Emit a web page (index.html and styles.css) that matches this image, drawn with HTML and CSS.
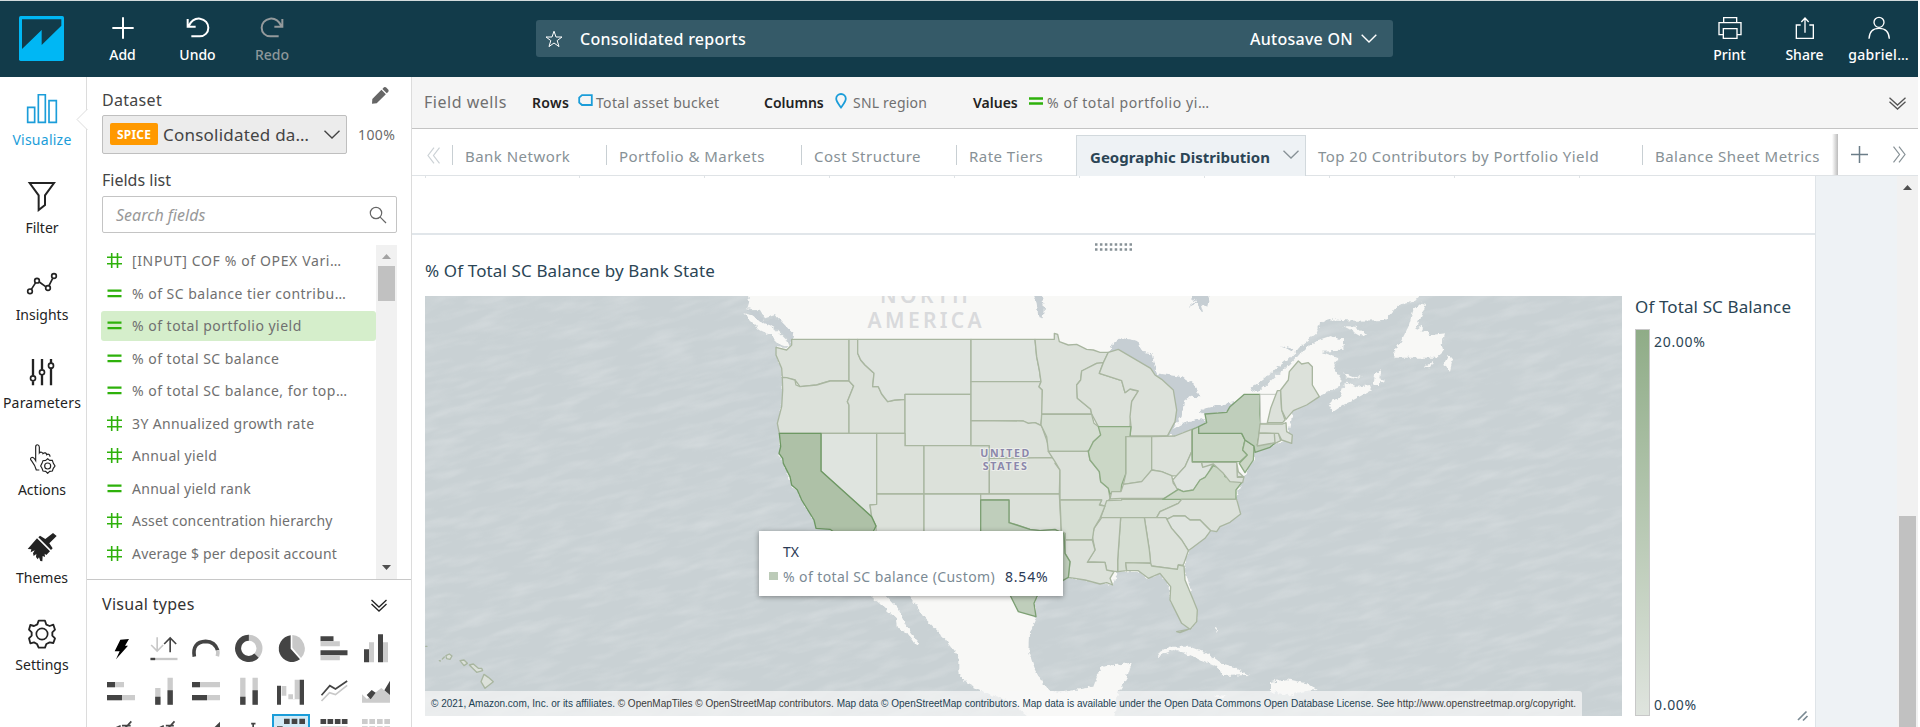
FILE: index.html
```html
<!DOCTYPE html>
<html lang="en">
<head>
<meta charset="utf-8">
<title>Consolidated reports</title>
<link rel="stylesheet" href="styles.css">
</head>
<body>
<div class="app">
  <header class="top">
    <svg class="logo" viewBox="57 48 135 135"><rect x="57" y="48" width="135" height="135" rx="5" fill="#00b7f4"/><path d="M66 58H184V77L125 135V90L66 147Z" fill="#123b4a"/></svg>
    <div class="tool add"><svg viewBox="324 48 90 72"><path d="M369 52V116M337 84H401" stroke-width="6"/></svg><span>Add</span></div>
    <div class="tool undo"><svg viewBox="550 48 90 72"><path d="M564 57V80H588M567 78C577 58 592 55 601 56C617 58 626 70 626 83C626 98 615 109 600 109H575" stroke-width="6"/></svg><span>Undo</span></div>
    <div class="tool redo"><svg viewBox="771 48 90 72"><path d="M847 57V80H823M844 78C834 58 819 55 810 56C794 58 785 70 785 83C785 98 796 109 811 109H836" stroke-width="6"/></svg><span>Redo</span></div>
    <div class="titlebar">
      <svg class="star" viewBox="0 0 18 18"><path d="M9 1.2L11 7H17L12.2 10.6L14 16.6L9 13L4 16.6L5.8 10.6L1 7H7Z"/></svg>
      <span class="doc">Consolidated reports</span>
      <span class="autosave">Autosave ON</span>
      <svg class="chev" viewBox="0 0 16 9"><path d="M.7 .7L8 8L15.3 .7"/></svg>
    </div>
    <div class="tool print"><svg viewBox="706 48 90 72"><path d="M732 68V53H771V68M731 104H718V68H784V104H772M731 86H772V115H731Z" stroke-width="4"/></svg><span>Print</span></div>
    <div class="tool share"><svg viewBox="930 48 90 72"><path d="M962 75H949V115H1000V75H988M975 98V55M964 66L975 54L986 66" stroke-width="4"/></svg><span>Share</span></div>
    <div class="tool user"><svg viewBox="1155 48 90 72"><circle cx="1200" cy="67" r="15" stroke-width="4"/><path d="M1170 116C1171 95 1182 85 1200 85S1230 95 1231 116" stroke-width="4"/></svg><span>gabriel…</span></div>
  </header>

  <div class="body">
    <nav class="nav">
      <a class="on"><svg viewBox="66 282 120 90"><path d="M83 322H104V367H83ZM115 284H136V367H115ZM147 302H169V367H147Z" stroke-width="5"/></svg><span class="n1">Visualize</span></a>
      <a><svg viewBox="66 546 120 90"><path d="M89 549H162L135 586V615L116 630V586Z" stroke-width="6"/></svg><span>Filter</span></a>
      <a><svg viewBox="66 86 120 90"><path d="M94 147L107 127M118 125L137 139M147 136L158 114" stroke-width="5"/><g stroke-width="5"><circle cx="90" cy="153" r="7"/><circle cx="111" cy="121" r="7"/><circle cx="144" cy="143" r="7"/><circle cx="162" cy="107" r="7"/></g></svg><span>Insights</span></a>
      <a><svg viewBox="66 351 120 90"><path d="M99 357V407M99 424V436M126 357V389M126 405V436M153 357V369M153 385V436" stroke-width="7"/><g stroke-width="5"><circle cx="99" cy="415" r="7.5"/><circle cx="126" cy="397" r="7.5"/><circle cx="153" cy="377" r="7.5"/></g></svg><span class="n4">Parameters</span></a>
      <a><svg viewBox="66 613 120 90"><path d="M118 691H109C105 676 101 672 92 660C90 653 98 650 104 658L107 663V622C107 613 117 613 118 622V640C122 635 128 638 129 642C134 637 139 640 140 645C146 641 150 646 150 651" stroke-width="3.500"/><path d="M143 657L149 662H157L160 671L165 679L160 686L157 694L149 695L143 701L137 695L129 694L126 686L122 679L126 671L129 663L137 662Z" stroke-width="3.500"/><circle cx="143" cy="679" r="9" stroke-width="3.500"/></svg><span>Actions</span></a>
      <a><svg viewBox="66 155 120 90"><path class="solid" d="M159 158L170 167L148 189L158 204L153 209L115 171L120 166L136 176ZM111 174L150 213L139 224L134 220L135 230L128 227L127 243L121 242L117 231L113 237L108 230L109 221L101 227L99 219L104 210L92 216L94 207L83 206Z"/></svg><span>Themes</span></a>
      <a><svg viewBox="66 417 120 90"><path d="M116 422H135L139 434L149 438L160 434L165 449L157 457V467L165 475L160 489L149 487L139 492L135 503H116L111 492L102 487L91 490L87 475L95 467V457L87 449L91 435L102 438L112 433Z" stroke-width="5.5" stroke-linejoin="round"/><circle cx="126" cy="462" r="17" stroke-width="5"/></svg><span>Settings</span></a>
    </nav>

    <aside class="panel">
      <svg class="notch" viewBox="0 0 12 22"><path d="M11.5 0L1 10.5L11.5 21" fill="#fff" stroke="#dcdcdc"/></svg>
      <div class="row head"><span class="h dataset">Dataset</span><svg class="pencil" viewBox="1115 260 54 54"><path d="M1115 313L1116 298L1145 269L1159 283L1130 312ZM1148 266L1153 261Q1157 259 1161 262L1167 269Q1169 273 1166 276L1162 280Z" fill="#666"/></svg></div>
      <div class="row source">
        <div class="select"><b>SPICE</b><span>Consolidated da…</span><svg class="chev" viewBox="0 0 16 9"><path d="M.5 .7L8 8L15.5 .7"/></svg></div>
        <span class="pct">100%</span>
      </div>
      <div class="h flist">Fields list</div>
      <div class="search"><i>Search fields</i><svg viewBox="0 0 18 18"><circle cx="7" cy="7" r="5.7"/><path d="M11.2 11.2L17 17"/></svg></div>
      <div class="listwrap">
        <ul class="list">
          <li class="s6"><svg class="hash"><use href="#hash"/></svg><span>[INPUT] COF % of OPEX Vari…</span></li>
          <li class="s5"><svg class="hash"><use href="#eq"/></svg><span>% of SC balance tier contribu…</span></li>
          <li class="sel s5"><svg class="hash"><use href="#eq"/></svg><span>% of total portfolio yield</span></li>
          <li class="s5"><svg class="hash"><use href="#eq"/></svg><span>% of total SC balance</span></li>
          <li class="s5"><svg class="hash"><use href="#eq"/></svg><span>% of total SC balance, for top…</span></li>
          <li class="s4"><svg class="hash"><use href="#hash"/></svg><span>3Y Annualized growth rate</span></li>
          <li class="s4"><svg class="hash"><use href="#hash"/></svg><span>Annual yield</span></li>
          <li class="s3"><svg class="hash"><use href="#eq"/></svg><span>Annual yield rank</span></li>
          <li class="s2"><svg class="hash"><use href="#hash"/></svg><span>Asset concentration hierarchy</span></li>
          <li class="s2"><svg class="hash"><use href="#hash"/></svg><span>Average $ per deposit account</span></li>
        </ul>
        <div class="sbar"><svg viewBox="0 0 9 5"><path d="M0 5L4.5 0L9 5Z" fill="#a3a3a3"/></svg><div class="thumb"></div><svg viewBox="0 0 9 5"><path d="M0 0L4.5 5L9 0Z" fill="#505050"/></svg></div>
      </div>
      <div class="vt"><span>Visual types</span><svg viewBox="0 0 16 13"><path d="M.5 1L8 8L15.5 1M.5 5L8 12L15.5 5"/></svg></div>
      <div class="types">
        <svg viewBox="300 440 127.5 128"><path d="M361 478L387 476L375 496H384L348 537L359 513H344Z" fill="#000"/></svg>
        <svg viewBox="427.5 440 127.5 128"><path d="M470 471V512M452 494L470 512L488 494" class="l"/><path d="M509 516V473M491 491L509 473L527 491" class="d"/><path d="M450 536H531" class="l" stroke-width="7"/><path d="M450 536H464" class="d" stroke-width="7"/></svg>
        <svg viewBox="555 440 127.5 128"><path d="M583 529C578 500 590 484 617 483C643 484 650 500 653 510" class="d" stroke-width="11"/><path d="M653 510Q655 518 652 528" class="l" stroke-width="11"/></svg>
        <svg viewBox="682.5 440 127.5 128"><circle cx="745" cy="504" r="32" class="l" stroke-width="18"/><path d="M745 472A32 32 0 1 0 768 526" class="d" stroke-width="18"/></svg>
        <svg viewBox="810 440 127.5 128"><path d="M872 465V505L900 537A40 40 0 1 1 872 465Z" fill="#444"/><path d="M877 464V502L903 533A41 41 0 0 0 877 464Z" fill="#c8c8c8"/></svg>
        <svg viewBox="937.5 440 127.5 128"><path d="M960 468H999V483H960ZM960 510H1041V525H960Z" fill="#444"/><path d="M960 483H1018V498H960ZM960 525H1018V540H960Z" fill="#ccc"/></svg>
        <svg viewBox="1065 440 127.5 128"><path d="M1092 507H1107V546H1092ZM1134 462H1149V546H1134Z" fill="#444"/><path d="M1107 486H1122V546H1107ZM1149 486H1164V546H1149Z" fill="#ccc"/></svg>
        <svg viewBox="300 568 127.5 128"><path d="M321 604H372V620H321ZM321 643H405V659H321Z" fill="#ccc"/><path d="M321 604H345V620H321ZM321 643H366V659H321Z" fill="#444"/></svg>
        <svg viewBox="427.5 568 127.5 128"><path d="M464 622H480V672H464ZM501 591H517V672H501Z" fill="#ccc"/><path d="M464 648H480V672H464ZM501 629H517V672H501Z" fill="#444"/></svg>
        <svg viewBox="555 568 127.5 128"><path d="M576 604H660V620H576ZM576 643H660V659H576Z" fill="#ccc"/><path d="M576 604H600V620H576ZM576 643H621V659H576Z" fill="#444"/></svg>
        <svg viewBox="682.5 568 127.5 128"><path d="M719 591H735V672H719ZM756 591H772V672H756Z" fill="#ccc"/><path d="M719 648H735V672H719ZM756 629H772V672H756Z" fill="#444"/></svg>
        <svg viewBox="810 568 127.5 128"><path d="M845 616H859V645H865V641H879V655H884V597H899V656H865V645H845Z" fill="#ccc"/><path d="M831 615H843V672H831ZM899 597H912V672H899Z" fill="#444"/></svg>
        <svg viewBox="937.5 568 127.5 128"><path d="M963 661L987 636L1005 642L1040 614" class="l"/><path d="M963 644L988 615L1005 625L1040 601" class="d"/></svg>
        <svg viewBox="1065 568 127.5 128"><path d="M1086 641L1101 655L1144 622L1170 643V666H1086Z" fill="#ccc"/><path d="M1100 643L1115 628L1127 636L1112 656ZM1170 600V643L1153 629Z" fill="#444"/></svg>
        <svg viewBox="300 696 127.5 128"><path d="M345 745L362 737M372 748L394 724M366 737H392" class="d"/></svg>
        <svg viewBox="427.5 696 127.5 128"><path d="M474 745L490 737M500 748L522 724M496 737H520" class="d"/></svg>
        <svg viewBox="555 696 127.5 128"><path d="M640 745L660 725V745Z" fill="#444"/></svg>
        <svg viewBox="682.5 696 127.5 128"><path d="M752 731H765M758 731V745" class="d"/></svg>
        <svg viewBox="810 696 127.5 128"><rect x="819" y="705" width="108" height="100" fill="#d3ebf7" stroke="#1b9dd9" stroke-width="6"/><path d="M852 716H869V732H852ZM875 716H892V732H875ZM898 716H915V732H898ZM831 739H848V755H831Z" fill="#444"/></svg>
        <svg viewBox="937.5 696 127.5 128"><path d="M960 717H977V732H960ZM981 717H998V732H981ZM1003 717H1020V732H1003ZM1024 717H1041V732H1024Z" fill="#444"/><path d="M960 739H1041V750H960Z" fill="#ccc"/></svg>
        <svg viewBox="1065 696 127.5 128"><path d="M1086 717H1103V732H1086ZM1108 717H1125V732H1108ZM1131 717H1148V732H1131ZM1153 717H1170V732H1153ZM1086 739H1103V750H1086ZM1108 739H1125V750H1108ZM1131 739H1148V750H1131ZM1153 739H1170V750H1153Z" fill="#ccc"/></svg>
      </div>
    </aside>

    <main class="main">
      <div class="wells">
        <span class="fw">Field wells</span>
        <b class="rows">Rows</b><svg class="tag" viewBox="0 0 15 13"><path d="M4 1.2H13.8V11H4L1.2 8.5V3.7Z"/></svg><span class="w1">Total asset bucket</span>
        <b class="cols">Columns</b><svg class="pin" viewBox="0 0 12 16"><path d="M6 14.5C3 10.5 1.2 8.300 1.200 5.800A4.800 4.800 0 0 1 10.800 5.800C10.800 8.300 9 10.500 6 14.500Z"/></svg><span class="w2">SNL region</span>
        <b class="vals">Values</b><svg class="weq" viewBox="0 0 14 8"><path d="M0 1.5H14M0 6.500H14"/></svg><span class="w3">% of total portfolio yi…</span>
        <svg class="dbl" viewBox="0 0 17 13"><path d="M.5 .7L8.500 8L16.500 .7M.5 4.700L8.500 12L16.500 4.700"/></svg>
      </div>
      <div class="tabs">
        <svg class="prev" viewBox="0 0 13 17"><path d="M7 .7L1 8.500L7 16.300M12.500 .7L6.500 8.500L12.500 16.300"/></svg>
        <span class="tab t1">Bank Network</span>
        <span class="tab t2">Portfolio &amp; Markets</span>
        <span class="tab t3">Cost Structure</span>
        <span class="tab t4">Rate Tiers</span>
        <span class="tab active"><span>Geographic Distribution</span><svg viewBox="0 0 16 9"><path d="M.5 .7L8 8L15.500 .7"/></svg></span>
        <span class="tab t6">Top 20 Contributors by Portfolio Yield</span>
        <span class="tab t7">Balance Sheet Metrics</span>
        <div class="tabend"><svg class="plus" viewBox="0 0 17 17"><path d="M8.500 0V17M0 8.500H17"/></svg><svg class="next" viewBox="0 0 13 17"><path d="M.5 .7L6.500 8.500L.5 16.300M6 .7L12 8.500L6 16.300"/></svg></div>
      </div>
      <div class="canvas">
        <div class="sheet">
          <div class="prevcard"><div class="ticks"><i></i><i></i><i></i><i></i><i></i><i></i><i></i><i></i><i></i><i></i></div></div>
          <section class="card">
            <svg class="grip" viewBox="0 0 37 8"><path d="M0 1.500H37M0 6.500H37" stroke-dasharray="2.500 2.430"/></svg>
            <h2>% Of Total SC Balance by Bank State</h2>
            <div class="visual">
              <div class="map">
                <svg class="mapsvg" viewBox="-945 18 3591 1260">
                  <defs>
                    <filter id="sea" x="0" y="0" width="100%" height="100%">
                      <feTurbulence type="fractalNoise" baseFrequency="0.008 0.035" numOctaves="3" seed="8"/>
                      <feColorMatrix values="0 0 0 0 1  0 0 0 0 1  0 0 0 0 1  1.3 0 0 0 -.55"/>
                    </filter>
                    <filter id="rough" x="-5%" y="-5%" width="110%" height="110%">
                      <feTurbulence type="fractalNoise" baseFrequency="0.08" numOctaves="2" seed="3"/>
                      <feDisplacementMap in="SourceGraphic" scale="16" xChannelSelector="R" yChannelSelector="G"/>
                    </filter>
                  </defs>
                  <rect x="-945" y="18" width="3591" height="1260" fill="#c9d1d4"/>
                  <g transform="rotate(-14 850 640)" opacity=".3"><rect x="-1300" y="-600" width="4400" height="2500" filter="url(#sea)"/></g>
                  <g fill="#f8f8f6" filter="url(#rough)">
                    <path d="M22 8L28 35L22 55L60 60L75 85L105 75L125 100L145 120L160 130L155 148L150 175L108 172L108 195L125 235L128 300L125 350L112 400L118 430L117 490L155 580L185 630L222 690L270 720L300 760L340 860L395 920L430 950L468 985L470 1010L500 1030L530 1068L538 1060L500 1010L470 950L440 918L410 860L440 830L510 918L550 980L600 1030L655 1100L655 1150L680 1180L740 1210L800 1230L830 1250L890 1300L1120 1300L1135 1205L1145 1190L1160 1165L1175 1118L1085 1130L1075 1150L1060 1190L950 1210L920 1195L885 1140L868 1090L870 1030L888 980L885 935L900 900L985 862L1118 885L1133 845L1195 842L1225 865L1260 850L1285 880L1290 930L1320 975L1350 1018L1370 995L1360 930L1332 830L1345 782L1412 722L1500 672L1488 625L1510 560L1540 510L1545 480L1640 450L1660 360L1738 318L1800 290L1802 265L1780 230L1795 205L1745 185L1785 183L1810 175L1812 150L1770 138L1735 150L1690 180L1650 225L1600 265L1555 308L1530 297L1600 243L1650 203L1680 170L1730 130L1740 100L1765 88L1850 92L1935 90L1975 45L2020 35L2045 8Z"/>
                    <path d="M10 70L35 75L60 82L100 112L140 150L150 175L120 165L90 135L60 120L30 90Z"/>
                    <path d="M1765 340L1780 365L1810 345L1840 330L1895 300L1890 285L1850 290L1822 275L1808 295L1800 320ZM1900 285L1905 255L1922 235L1918 265L1932 270L1915 285ZM1810 250L1840 262L1865 258L1850 268L1820 262ZM1810 108L1845 110L1885 138L1860 135Z"/>
                    <path d="M2045 38L2020 60L2005 110L1985 150L1960 190L1965 203L2090 203L2110 185L2105 165L2115 130L2070 135L2065 122L2045 125L2050 105L2025 120L2040 90L2058 42ZM2110 225L2125 195L2138 210L2130 242ZM2055 230L2080 212L2070 232Z"/>
                    <path d="M1252 1090L1290 1070L1350 1070L1400 1090L1440 1118L1480 1130L1527 1155L1450 1158L1430 1130L1380 1110L1340 1090L1300 1080L1255 1098ZM1590 1176L1640 1168L1700 1180L1730 1200L1680 1206L1650 1216L1590 1206ZM1425 1215L1460 1217L1445 1226ZM1425 1010L1432 1015L1427 1030Z"/>
                  </g>
                  <g fill="#c6ced3" filter="url(#rough)">
                    <path d="M880 10L890 40L895 80L908 85L912 55L905 10ZM1350 10L1365 35L1345 52L1370 40L1390 70L1383 44L1405 50L1408 30L1400 10Z"/>
                    <path d="M1105 188L1120 160L1140 143L1195 153L1205 185L1235 190L1240 215L1250 250L1330 262L1360 282L1382 322L1350 320L1332 335L1325 380L1310 400L1285 440L1180 440L1170 310L1080 250Z"/>
                    <path d="M1285 425L1330 400L1395 385L1400 395L1375 410L1305 440ZM1375 365L1400 355L1440 345L1490 335L1460 365L1395 372Z"/>
                    <path d="M20 60L60 95L110 115L145 145L152 170L160 132L120 90L100 85L75 95L50 65ZM1622 166L1660 178L1655 184Z"/>
                  </g>
                  <g class="cont"><text x="557" y="38">NORTH</text><text x="559" y="115">AMERICA</text></g>
                  <g class="st">
                    <path d="M155 148H327V272L270 273L230 285L180 290L165 270L127 262L125 235L108 195V172L140 180L155 165Z"/>
                    <path d="M127 262L140 263L165 270L168 285L180 290L230 285L270 273H328L341 288L322 335L327 345V430H118L112 400L125 350L128 300Z"/>
                    <path d="M327 148H353V190L362 210L375 225L402 250L398 290L415 290L425 312L443 335L465 330L495 328V430H327V345L322 335L341 288L327 273Z"/>
                    <path class="b" d="M353 148H693V313H495V328L465 330L443 335L425 312L415 290L398 290L402 250L375 225L362 210L353 190Z"/>
                    <path class="b" d="M495 313H693V467H495Z"/><path class="b" d="M243 430H410V643L390 645L395 680L243 543Z"/>
                    <path d="M410 430H495V467H552V612H410Z"/><path d="M552 467H748V612H552Z"/>
                    <path d="M410 612H552V760H408V708L395 680L390 645L410 643Z"/><path class="b" d="M552 612H722V760H552Z"/>
                    <path class="b" d="M693 148H885L890 200L898 240L903 275H693Z"/>
                    <path d="M693 275H903L897 290L907 300V373L902 405L885 398L865 400L850 393L693 392Z"/>
                    <path d="M693 392L850 393L865 400L885 398L905 408L920 450L937 503L748 505V467H693Z"/>
                    <path d="M748 505L937 503L950 515L945 520L960 540L958 612H748Z"/>
                    <path d="M722 612H958L964 725L940 720L900 722L870 718L830 705L807 698V630H722Z"/>
                    <path d="M885 148H943V130L953 133L958 155L985 165L1010 163L1040 178L1060 180L1080 187L1105 187L1090 218L1070 220L1025 243L1022 270L1010 285L1012 325L1052 358L1055 372H905L907 300L897 290L903 275L898 240L890 200Z"/>
                    <path d="M1070 220L1090 218L1078 250L1145 272L1155 308L1170 297L1195 303L1175 335L1170 410H1075L1055 372L1052 358L1012 325L1010 285L1022 270L1025 243Z"/>
                    <path d="M1105 187L1135 178L1232 235L1245 255L1265 268L1300 300L1310 360L1305 395L1282 438H1170L1173 410L1170 380L1175 335L1195 303L1170 297L1155 308L1145 272L1078 250L1090 218Z"/>
                    <path class="g1" d="M905 373H1055L1062 400L1082 415V435L1060 455V475L1040 484H925L920 440L903 405Z"/>
                    <path d="M925 484H1045L1050 510L1078 545L1082 575L1105 595L1110 625L1095 648L1078 645L1085 630H960V540L945 515Z"/>
                    <path class="g2" d="M1075 410H1173L1170 440H1158V550L1145 585L1143 605L1110 612L1105 595L1082 575L1078 545L1050 510L1045 485L1060 455L1082 435Z"/>
                    <path class="g1" d="M1158 440H1235V540L1222 562L1205 575L1150 583L1158 550Z"/>
                    <path d="M1235 440L1305 438L1355 418V485L1335 530L1310 557L1295 558L1265 545L1235 540Z"/>
                    <path d="M1110 627L1115 605H1143L1150 583L1205 575L1235 540L1265 545L1295 557L1300 580L1315 598L1280 625H1145Z"/>
                    <path class="g1" d="M1100 632L1145 630V627L1325 628L1315 640L1260 665L1250 683H1082Z"/>
                    <path class="b" d="M1355 485L1357 517H1385L1388 530L1420 520L1400 560L1380 570L1360 600L1330 605L1310 595L1298 570L1310 557L1335 530Z"/>
                    <path class="g2" d="M1268 628L1315 598L1330 605L1360 600L1380 570L1395 562L1420 527L1450 540L1455 560L1505 578L1488 600V628Z"/>
                    <path d="M1385 517H1490L1492 560H1512L1508 578L1470 575L1450 550L1420 522L1388 532ZM1490 517L1495 545L1512 562H1492Z"/>
                    <path class="g2 k" d="M1357 418L1376 410V430H1505L1515 450L1508 480L1522 495L1500 515H1357Z"/>
                    <path class="g2 k" d="M1515 450L1542 468L1540 510L1515 548L1498 520L1522 495L1508 480Z"/>
                    <path class="g3" d="M1376 410L1400 398L1395 372L1460 367L1470 350L1513 313H1560V370L1562 400L1555 450L1552 465L1610 455L1590 472L1545 487L1542 468L1515 450L1505 430H1376Z"/>
                    <path fill="#f8f8f6" stroke="#ccc" d="M1560 313H1610L1585 400H1562Z"/>
                    <path d="M1612 302H1622L1625 360L1635 390L1628 398H1582L1592 355Z"/>
                    <path d="M1622 300L1645 270L1648 245L1675 213L1685 222L1705 218L1717 230V285L1738 320L1700 345L1660 362L1638 388L1625 360Z"/>
                    <path d="M1560 402H1628L1638 398L1640 425L1657 435L1655 460L1625 450L1615 430L1557 428ZM1557 430H1603L1605 458L1552 468ZM1603 430H1615L1622 452L1605 460Z"/>
                    <path d="M1325 628H1490L1502 672L1470 697L1440 710L1430 725L1412 722L1380 690L1350 690L1335 678H1300L1278 688L1250 683L1260 665L1315 640Z"/>
                    <path class="b" d="M1278 690L1300 678H1335L1350 690H1380L1412 722L1395 745L1345 782L1325 750L1295 715Z"/>
                    <path d="M1213 683H1278L1295 715L1325 750L1345 782L1332 820L1328 826L1315 825L1312 838L1232 828L1228 780Z"/>
                    <path class="g1" d="M1142 683H1213L1228 780L1232 818L1157 820L1160 842L1133 845V810Z"/>
                    <path d="M1085 683H1142L1133 810V845L1100 842L1095 817L1042 815L1065 780L1057 740L1062 715Z"/>
                    <path class="g1" d="M960 630H1085L1078 645L1095 648L1080 685L1062 715L1057 750H976V730L964 725Z"/>
                    <path d="M976 750H1057L1065 780L1042 817H1095L1100 840L1122 845L1110 865L1118 885L1100 878L1080 882L1035 870L985 862L990 815L975 790Z"/>
                    <path class="g1" d="M1157 818L1232 820L1235 828L1312 838L1315 825L1332 828L1335 870L1360 930L1372 960L1370 995L1350 1018L1325 1000L1310 970L1290 930L1292 890L1260 850L1225 865L1195 842L1160 842ZM1310 1025L1345 1018L1320 1028Z"/>
                    <path class="g3" d="M722 630H807V698L830 705L870 718L900 722L945 718L972 732L975 790L990 815L985 862L893 915L882 940L888 980L835 965L810 915L700 850L722 740Z"/>
                    <path class="ca" d="M118 430H243V543L395 680L408 708L395 735L300 740L270 718L228 715L222 690L185 630L172 600L155 585L150 560L130 520L128 505L117 490L122 470Z"/>
                    <path d="M-768 1153L-755 1162L-740 1175L-765 1195L-777 1175ZM-812 1125L-800 1122L-785 1135L-775 1135L-772 1142L-790 1147ZM-840 1112L-828 1110L-818 1120L-828 1127ZM-882 1097L-872 1092L-864 1098L-870 1108L-880 1106ZM-893 1107L-887 1101ZM-902 1112L-899 1113ZM-943 1069L-939 1069Z"/>
                  </g>
                  <g class="us"><text x="797" y="501">UNITED</text><text x="797" y="541">STATES</text></g>
                </svg>
                <div class="attr"><span>© 2021, Amazon.com, Inc. or its affiliates. <em>© OpenMapTiles © OpenStreetMap contributors.</em> Map data © OpenStreetMap contributors. Map data is available under the Open Data Commons Open Database License. See <em>http://www.openstreetmap.org/copyright.</em></span></div>
                <div class="tip"><div class="tt">TX</div><div class="tr"><i></i><span>% of total SC balance (Custom)</span><b>8.54%</b></div></div>
              </div>
              <div class="legend">
                <div class="lt">Of Total SC Balance</div>
                <div class="scale"><div class="bar"></div><div class="lab"><span>20.00%</span><span>0.00%</span></div></div>
              </div>
            </div>
            <svg class="grab" viewBox="0 0 12 12"><path d="M1 10L9.500 1.500M6 10.500L10.500 6"/></svg>
          </section>
        </div>
        <div class="gutter"></div>
        <div class="vbar"><svg viewBox="0 0 9 5"><path d="M0 5L4.500 0L9 5Z" fill="#505050"/></svg><div class="thumb"></div></div>
      </div>
    </main>
  </div>
</div>
<svg class="defs"><symbol id="hash" viewBox="0 0 15 15"><path d="M4.700 0V15M10.500 0V15M0 4.200H15M0 10.700H15" stroke="#2eb10b" stroke-width="1.600"/></symbol><symbol id="eq" viewBox="0 0 15 15"><path d="M.5 4.700H14.500M.5 10.200H14.500" stroke="#2eb10b" stroke-width="2.300"/></symbol></svg>
</body>
</html>
```
FILE: styles.css
```css
* { box-sizing: border-box; }
body { margin: 0; background: #fff; overflow: hidden; font-family: "Noto Sans", sans-serif; color: #444; }
svg { display: block; fill: none; flex: none; }
.defs { width: 0; height: 0; }
.app { width: 1918px; height: 727px; overflow: hidden; display: flex; flex-direction: column; white-space: nowrap; }

/* Header */
.top { height: 77px; flex: none; background: #123b4a; border-top: 1px solid #d3dbdd; display: flex; align-items: flex-start; color: #fff; }
.logo { width: 45px; height: 45px; margin: 15px 0 0 19px; }
.tool { width: 75px; padding-top: 15px; display: flex; flex-direction: column; align-items: center; font-size: 14px; font-weight: 500; line-height: 20px; }
.tool svg { width: 30px; height: 24px; margin-bottom: 5px; stroke: #fff; }
.add { margin-left: 21px; }
.redo { color: #8d979a; width: 74px; }
.redo svg { stroke: #949a9c; }
.titlebar { width: 857px; height: 37px; margin: 19px 299px 0 227px; background: #355a68; border-radius: 3px; display: flex; align-items: center; padding: 0 16px 0 9px; font-size: 16px; font-weight: 500; letter-spacing: .27px; }
.star { width: 18px; height: 18px; stroke: #fff; stroke-width: 1; margin-right: 17px; }
.doc { flex: 1; }
.chev { width: 16px; height: 9px; stroke: currentColor; stroke-width: 1.4; margin-left: 8px; }
.print { width: 75px; }
.share { width: 75px; }
.user { width: 73px; letter-spacing: .3px; }

.body { flex: 1; display: flex; min-height: 0; }

/* Left navigation */
.nav { width: 87px; border-right: 1px solid #dcdcdc; display: flex; flex-direction: column; flex: none; padding-top: 17px; }
.nav a { height: 87.5px; width: 84px; display: flex; flex-direction: column; align-items: center; font-size: 14px; line-height: 20px; color: #232323; }
.nav svg { width: 40px; height: 30px; margin-bottom: 6px; stroke: currentColor; }
.nav .on { color: #1b9dd9; letter-spacing: .25px; }
.n4 { letter-spacing: .2px; }
.solid { fill: #232323; stroke: none; }

/* Data panel */
.panel { width: 325px; border-right: 1px solid #dcdcdc; flex: none; position: relative; padding-top: 10px; }
.notch { position: absolute; left: -11px; top: 32px; width: 12px; height: 22px; }
.row { display: flex; align-items: center; padding-left: 15px; }
.head { height: 26px; }
.h { font-size: 16px; }
.dataset { letter-spacing: .3px; }
.pencil { width: 17px; height: 17px; margin: -9px 22px 0 auto; }
.source { margin-top: 2px; }
.select { width: 245px; height: 39px; background: #ececec; border: 1px solid #bfbfbf; border-radius: 2px; display: flex; align-items: center; padding: 0 6px 0 7px; }
.select b { width: 48px; height: 22px; margin-top: -2px; border-radius: 2px; background: #ff9900; color: #fff; font-size: 12px; line-height: 23px; text-align: center; letter-spacing: .2px; }
.select span { font-size: 17px; margin-left: 5px; flex: 1; letter-spacing: .22px; margin-top: -1px; }
.pct { margin-left: 11px; font-size: 14px; color: #6a6a6a; letter-spacing: .4px; }
.flist { margin: 13px 0 3px 15px; height: 26px; line-height: 26px; }
.search { margin-left: 15px; width: 295px; height: 37px; border: 1px solid #c4c4c4; border-radius: 2px; display: flex; align-items: center; justify-content: space-between; padding: 0 9px 0 13px; font-size: 16px; color: #999; }
.search svg { width: 18px; height: 18px; stroke: #666; stroke-width: 1.2; }
.listwrap { margin: 12px 0 0 14px; width: 296px; height: 334px; display: flex; overflow: hidden; }
.list { list-style: none; margin: 0; padding: .6px 0 0; width: 275px; }
.list li { height: 30px; margin-bottom: 2.550px; border-radius: 3px; display: flex; align-items: center; padding-left: 6px; font-size: 14px; color: #707070; }
.list .sel { background: #d5eecb; }
.list .s6 { letter-spacing: .63px; }
.list .s5 { letter-spacing: .48px; }
.list .s4 { letter-spacing: .37px; }
.list .s3 { letter-spacing: .29px; }
.list .s2 { letter-spacing: .18px; }
.hash { width: 15px; height: 15px; margin-right: 10px; }
.sbar { width: 21px; background: #f1f1f1; display: flex; flex-direction: column; align-items: center; padding: 9px 0; }
.sbar svg { width: 9px; height: 5px; }
.sbar .thumb { width: 17px; height: 35px; background: #c1c1c1; margin: 7px 0 auto; }
.vt { border-top: 1px solid #c8c8c8; height: 48px; display: flex; align-items: center; justify-content: space-between; padding: 0 24px 0 15px; font-size: 16px; color: #333; letter-spacing: .3px; }
.vt svg { width: 16px; height: 13px; stroke: #222; stroke-width: 1.3; margin-top: 3px; }
.types { display: grid; grid-template-columns: repeat(7, 42.5px); grid-auto-rows: 42.670px; margin-left: 13px; }
.types svg { width: 42.5px; height: 42.670px; }
.types .l { stroke: #c8c8c8; }
.types .d { stroke: #444; }
.types path { stroke-width: 5; }
.types path:not([class]) { stroke-width: 0; }
.types path[stroke-width="7"] { stroke-width: 7; }
.types path[stroke-width="11"] { stroke-width: 11; }
.types path[stroke-width="18"] { stroke-width: 18; }

/* Field wells */
.main { flex: 1; display: flex; flex-direction: column; min-width: 0; }
.wells { height: 52px; background: #f5f5f5; border-bottom: 1px solid #c4c4c4; display: flex; align-items: center; font-size: 14px; color: #707070; flex: none; }
.wells b { color: #222; font-weight: 600; }
.fw { margin: -2px 0 0 12px; width: 108px; font-size: 16px; letter-spacing: .52px; }
.rows { width: 46px; letter-spacing: .3px; }
.tag { width: 15px; height: 13px; margin: -4px 3px 0 0; stroke: #1b9dd9; stroke-width: 1.8; }
.w1 { width: 168px; letter-spacing: .32px; }
.cols { width: 71px; }
.pin { width: 12px; height: 16px; margin: -3px 6px 0 0; stroke: #1b9dd9; stroke-width: 1.800; }
.w2 { width: 120px; letter-spacing: .2px; }
.vals { width: 56px; }
.weq { width: 14px; height: 8px; margin: -4px 4px 0 0; stroke: #2eb10b; stroke-width: 2.600; }
.w3 { letter-spacing: .6px; }
.dbl { width: 17px; height: 13px; stroke: #555; stroke-width: 1.300; margin: 1px 12px 0 auto; }

/* Sheet tabs */
.tabs { height: 47px; border-bottom: 1px solid #dfe3e6; display: flex; align-items: center; flex: none; font-size: 15px; letter-spacing: .47px; color: #879196; }
.prev { width: 13px; height: 17px; margin: 6px 12px 0 15px; stroke: #ccd2d6; stroke-width: 1.200; }
.tab { height: 20px; line-height: 22px; margin-top: 6px; border-left: 1px solid #c8cfd3; padding-left: 12px; }
.t1 { width: 154px; }
.t2 { width: 195px; }
.t3 { width: 155px; }
.t4 { width: 120px; }
.tab.active { align-self: flex-end; width: 230px; height: 41px; margin: 0 0 -1px; background: #eef2f5; border: 1px solid #d2d9dd; border-bottom: 0; padding: 0 6px 0 13px; display: flex; align-items: center; justify-content: space-between; color: #2b4555; font-weight: 700; letter-spacing: .02px; font-size: 15px; }
.tab.active span { font-size: 15px; margin-top: 2px; }
.tab.active svg { width: 16px; height: 9px; stroke: #879196; stroke-width: 1.300; margin-top: -3px; }
.t6 { border: 0; width: 336px; }
.t7 { width: 190px; }
.tabend { flex: 1; align-self: flex-end; height: 41px; display: flex; align-items: center; position: relative; background: linear-gradient(90deg, #fff0, #bbb 6px, #fff 6px); }
.plus { width: 17px; height: 17px; stroke: #6b7d88; stroke-width: 1.500; margin-left: 19px; }
.next { width: 13px; height: 17px; stroke: #879196; stroke-width: 1.200; margin-left: 25px; }

/* Canvas */
.canvas { flex: 1; display: flex; min-height: 0; }
.sheet { width: 1404px; border-right: 1px solid #dfe4e8; display: flex; flex-direction: column; }
.prevcard { height: 59px; border-bottom: 2px solid #e1e6ea; flex: none; padding-left: 13px; }
.ticks { display: flex; }
.ticks i { width: 125px; height: 2px; border-left: 1px solid #dfe3e6; }
.ticks i:first-child { width: 154px; }
.card { flex: 1; padding: 8px 0 0 13px; position: relative; }
.grip { width: 37px; height: 8px; margin: 0 auto; stroke: #879196; stroke-width: 2.500; transform: translateX(-7px); }
.card h2 { margin: 7px 0 0; font-size: 17px; letter-spacing: .13px; font-weight: 400; line-height: 26px; height: 38px; color: #2b4555; }
.visual { display: flex; height: 420px; }
.map { width: 1197px; height: 420px; position: relative; overflow: hidden; }
.mapsvg { width: 1197px; height: 420px; }
.st path { fill: #dce1da; stroke: #a9b6a0; stroke-width: 4; stroke-linejoin: round; }
.st .b { fill: #dfe4df; }
.st .g1 { fill: #d6ded3; }
.st .g2 { fill: #cbd7c6; stroke: #8dab83; }
.st .g3 { fill: #bfcebb; stroke: #7da074; }
.st .ca { fill: #aec1a7; stroke: #6d9863; }
.st path[fill] { fill: #f8f8f6; stroke: #c4c9c2; stroke-width: 3; }
.cont text { font: 600 63px "Noto Sans", sans-serif; letter-spacing: 10px; fill: #d9dadc; text-anchor: middle; }
.us text { font: 700 32px "Noto Sans", sans-serif; letter-spacing: 5px; fill: #8b87ab; stroke: #eceeea; stroke-width: 6; paint-order: stroke; text-anchor: middle; }
.attr { position: absolute; left: 0; bottom: 0; width: 1157px; height: 25px; line-height: 26px; padding-left: 6px; background: rgba(248, 248, 248, .7); border-radius: 0 3px 0 0; font-family: "Liberation Sans", sans-serif; font-size: 10px; color: #1d4253; }
.attr em { font-style: normal; color: #3c3c3c; }
.tip { position: absolute; left: 334px; top: 235px; width: 304px; height: 65px; background: #fff; box-shadow: 0 1px 5px rgba(0, 0, 0, .4); padding: 8px 0 0 10px; font-size: 14px; }
.tt { padding-left: 14px; line-height: 26px; color: #2b3a55; }
.tr { display: flex; align-items: center; line-height: 24px; color: #7b8a94; letter-spacing: .4px; }
.tr i { width: 9px; height: 8px; background: #bccbb8; margin: -2px 5px 0 0; }
.tr span { width: 222px; }
.tr b { font-weight: 400; color: #2b3a55; letter-spacing: .8px; }
.legend { margin-left: 13px; color: #2b4555; }
.lt { height: 33px; line-height: 22px; font-size: 17px; letter-spacing: .12px; }
.scale { display: flex; height: 387px; }
.bar { width: 15px; border: 1px solid #c8c8c8; background: linear-gradient(#8fac87, #dfe4de); }
.lab { display: flex; flex-direction: column; justify-content: space-between; padding: 3px 0 1px 4px; font-size: 14px; line-height: 20px; letter-spacing: .7px; }
.grab { position: absolute; right: 6px; bottom: 5px; width: 12px; height: 12px; stroke: #7b8a94; stroke-width: 1.700; }
.gutter { width: 81px; background: #eef2f5; }
.vbar { flex: 1; background: #f1f1f1; display: flex; flex-direction: column; align-items: center; padding-top: 9px; }
.vbar svg { width: 9px; height: 5px; }
.vbar .thumb { width: 17px; flex: 1; background: #c1c1c1; margin-top: 326px; }
```
